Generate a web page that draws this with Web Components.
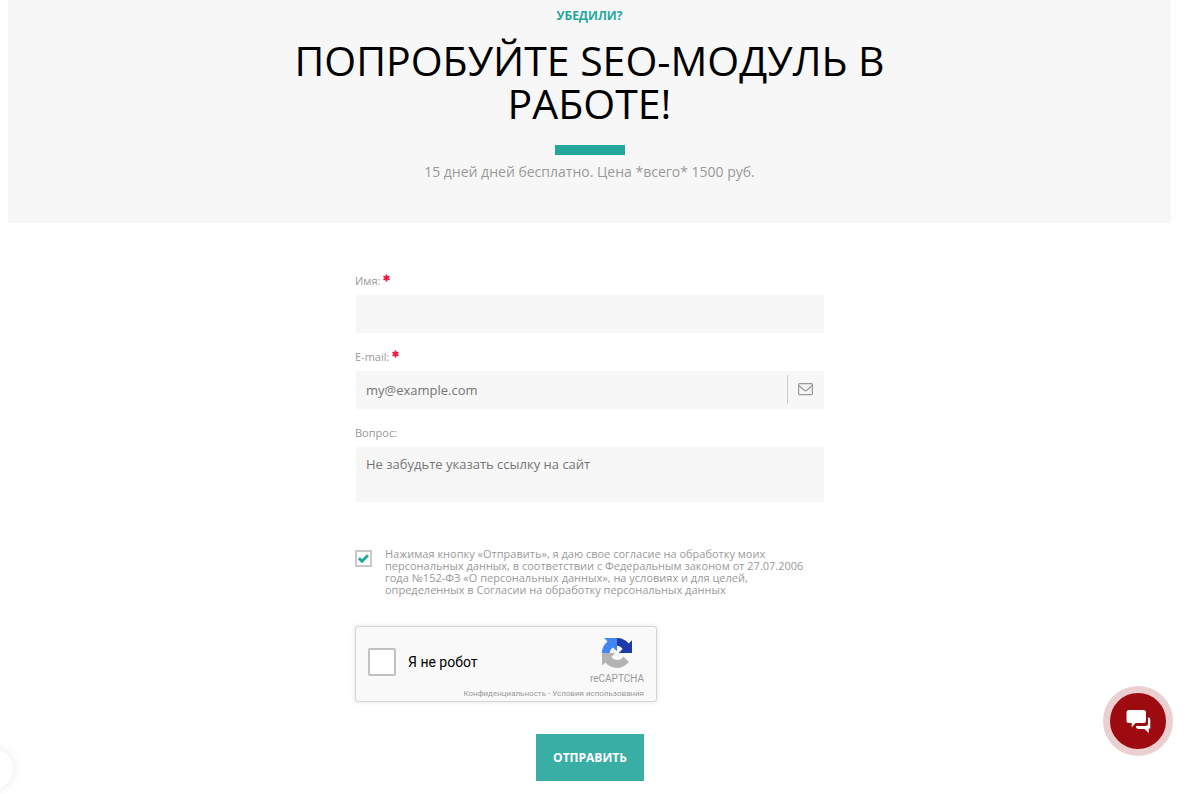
<!DOCTYPE html>
<html lang="ru">
<head>
<meta charset="utf-8">
<title>SEO-модуль</title>
<style>
body{margin:0;padding:0 15px 0 8px;background:#fff;color:#999;font-family:"Open Sans","Noto Sans",sans-serif;font-size:14px}
</style>
</head>
<body>
<promo-header>
  <span slot="eyebrow">УБЕДИЛИ?</span>
  <span slot="title">ПОПРОБУЙТЕ SEO-МОДУЛЬ В РАБОТЕ!</span>
  <span slot="lead">15 дней дней бесплатно. Цена *всего* 1500 руб.</span>
</promo-header>
<request-form>
  <form-field label="Имя:" name="name" required></form-field>
  <form-field label="E-mail:" name="email" type="email" placeholder="my@example.com" icon required></form-field>
  <form-field label="Вопрос:" name="question" type="textarea" placeholder="Не забудьте указать ссылку на сайт"></form-field>
  <consent-check>Нажимая кнопку «Отправить», я даю свое согласие на обработку моих персональных данных, в соответствии с Федеральным законом от 27.07.2006 года №152-ФЗ «О персональных данных», на условиях и для целей, определенных в Согласии на обработку персональных данных</consent-check>
  <robot-check></robot-check>
  <submit-button>ОТПРАВИТЬ</submit-button>
</request-form>
<side-bubble></side-bubble>
<chat-button></chat-button>
<script>
function define(name, markup) {
  customElements.define(name, class extends HTMLElement {
    constructor() {
      super();
      this.attachShadow({ mode: 'open' });
    }
    connectedCallback() {
      this.shadowRoot.innerHTML = typeof markup === 'function' ? markup(this) : markup;
    }
  });
}

define('promo-header', `
<style>
:host{display:block;background:#f7f7f7;padding:6px 16px 41px;text-align:center}
.eyebrow{margin:0 0 13px;font-size:12px;line-height:20px;font-weight:700;color:#22a79c}
h1{margin:0 auto;max-width:640px;font-size:41px;line-height:43px;font-weight:400;color:#000}
.bar{width:70px;height:10px;margin:20px auto 7px;background:#22a79c}
.lead{margin:0;line-height:20px}
</style>
<p class="eyebrow"><slot name="eyebrow"></slot></p>
<h1><slot name="title"></slot></h1>
<div class="bar"></div>
<p class="lead"><slot name="lead"></slot></p>`);

define('request-form', `
<style>
:host{display:block;padding:50px 16px 13px 17px}
form{display:flex;flex-direction:column;gap:15px;max-width:470px;margin:0 auto}
::slotted(consent-check){margin-top:30px}
::slotted(robot-check){margin-top:15px}
::slotted(submit-button){margin-top:17px;align-self:center}
</style>
<form><slot></slot></form>`);

define('form-field', el => {
  const attr = n => el.getAttribute(n) || '';
  const area = attr('type') === 'textarea';
  const required = el.hasAttribute('required');
  const control = area
    ? `<textarea id="control" name="${attr('name')}" placeholder="${attr('placeholder')}"></textarea>`
    : `<input id="control" name="${attr('name')}" type="${attr('type') || 'text'}" placeholder="${attr('placeholder')}" ${required ? 'required' : ''}>`;
  return `
<style>
:host{display:flex;flex-direction:column;gap:5px}
label{display:flex;gap:3px;font-size:11px;line-height:16px}
label svg{margin-top:1px}
.box{display:flex;align-items:center;border:1px solid #fff;background:#f7f7f7}
input,textarea{flex:1;min-width:0;box-sizing:border-box;margin:0;border:0;outline:0;background:none;color:#555;font:13px/20px "Open Sans","Noto Sans",sans-serif;padding:9px 10px;height:38px;border-radius:0}
textarea{display:block;height:55px;padding:7px 10px;resize:none}
::placeholder{color:#757575;opacity:1}
.icon{display:flex;align-items:center;justify-content:center;width:36px;height:29px;margin-bottom:1px;border-left:1px solid #ccc}
</style>
<label for="control">${attr('label')}${required ? '<svg width="7" height="8" viewBox="0 0 7 8" aria-hidden="true"><path d="M3.5 0.5V7.5M0.5 2.3L6.5 5.7M6.5 2.3L0.5 5.7" stroke="#f0143c" stroke-width="1.8"/></svg>' : ''}</label>
<div class="box">${control}${el.hasAttribute('icon') ? '<span class="icon"><svg width="16" height="13" viewBox="0 0 16 13" fill="none" stroke="#999" stroke-width="1.2" aria-hidden="true"><rect x=".6" y=".6" width="13.800" height="11" rx="1"/><path d="M.8 2.500L6.200 7.200Q7.500 8.200 8.800 7.200L14.200 2.500"/></svg></span>' : ''}</div>`;
});

define('consent-check', `
<style>
:host{display:block}
label{display:flex;align-items:flex-start;gap:13px;font-size:11px;line-height:12px}
input{appearance:none;flex:none;box-sizing:border-box;width:17px;height:17px;margin:2px 0 0;border:2px solid #c9c9c9;background:#fff}
input:checked{background:url("data:image/svg+xml,%3Csvg xmlns='http://www.w3.org/2000/svg' viewBox='0 0 13 13'%3E%3Cpath d='M1.9 6.100L5 9.200L11 3.200' fill='none' stroke='%2322a79c' stroke-width='2.900'/%3E%3C/svg%3E") center/13px no-repeat}
span{max-width:425px}
</style>
<label><input type="checkbox" checked><span><slot></slot></span></label>`);

define('robot-check', `
<style>
:host{display:flex;box-sizing:border-box;width:302px;height:76px;border:1px solid #d3d3d3;border-radius:3px;background:#f9f9f9;box-shadow:0 0 4px 1px rgba(0,0,0,.08);font-family:Roboto,sans-serif;padding:0 12px;justify-content:space-between}
label{display:flex;align-items:center;gap:12px;height:70px;font-size:14px;line-height:20px;color:#000;white-space:nowrap}
input{appearance:none;box-sizing:border-box;width:28px;height:28px;margin:0;border:2px solid #c1c1c1;border-radius:2px;background:#fff}
.brand{display:flex;flex-direction:column;align-items:flex-end;padding-top:11px;width:0;white-space:nowrap;color:#999}
.mark{width:54px;display:flex;flex-direction:column;align-items:center;font-size:10px;line-height:12px;gap:5px}
.links{font-size:8px;line-height:10px;margin-top:4px}
a{color:inherit;text-decoration:none}
</style>
<label><input type="checkbox">Я не робот</label>
<div class="brand">
  <div class="mark">
    <svg width="30" height="30" viewBox="0 0 64 64" aria-hidden="true">
      <path fill="#1c3aa9" d="M32 0A32 32 0 0 1 56.800 11.800L64 4.600V32H35.700L44 23.700A15.500 15.500 0 0 0 32 16.300z"/>
      <path fill="#4285f4" d="M0 32A32 32 0 0 1 11.800 7.200L4.600 0H32V28.300L23.700 20A15.500 15.500 0 0 0 16.300 32z"/>
      <path fill="#b3b3b3" d="M0 32V59.300L7.200 52.100A32 32 0 0 0 57.400 51.400L45.700 39.500A15.500 15.500 0 0 1 20 40.400L28.300 32z"/>
    </svg>
    <span>reCAPTCHA</span>
  </div>
  <div class="links"><a href="#privacy">Конфиденциальность</a> - <a href="#terms">Условия использования</a></div>
</div>`);

define('submit-button', `
<style>
:host{display:block}
button{display:block;border:0;margin:0;padding:14px 17px 13px;background:#39aea5;color:#fff;font:700 12px/20px "Open Sans","Noto Sans",sans-serif;cursor:pointer}
</style>
<button type="button"><slot></slot></button>`);

define('side-bubble', `
<style>
:host{display:block;position:fixed;left:-27px;bottom:5px;width:40px;height:40px;border-radius:50%;background:#fff;box-shadow:0 0 12px rgba(0,0,0,.1)}
</style>`);

define('chat-button', `
<style>
:host{display:block;position:fixed;right:13px;bottom:38px}
button{display:flex;align-items:center;justify-content:center;box-sizing:border-box;width:70px;height:70px;padding:0;border:7px solid #ebcfd1;border-radius:50%;background:#9d0a0f;cursor:pointer}
</style>
<button type="button" aria-label="Чат"><svg width="25" height="24" viewBox="0 0 25 24" fill="#fff" aria-hidden="true"><path d="M3 1H17.500A2.500 2.500 0 0 1 20 3.500V11.500A2.500 2.500 0 0 1 17.500 14H9.500L5.700 18.500V14H3A2.500 2.500 0 0 1 .5 11.500V3.500A2.500 2.500 0 0 1 3 1z"/><path d="M22 8.500Q24.300 8.200 24.300 10.500V19.500H22.800V24L18.500 20H12.500Q10 20 10 17H19.500Q22 17 22 14.500z"/></svg></button>`);
</script>
</body>
</html>
